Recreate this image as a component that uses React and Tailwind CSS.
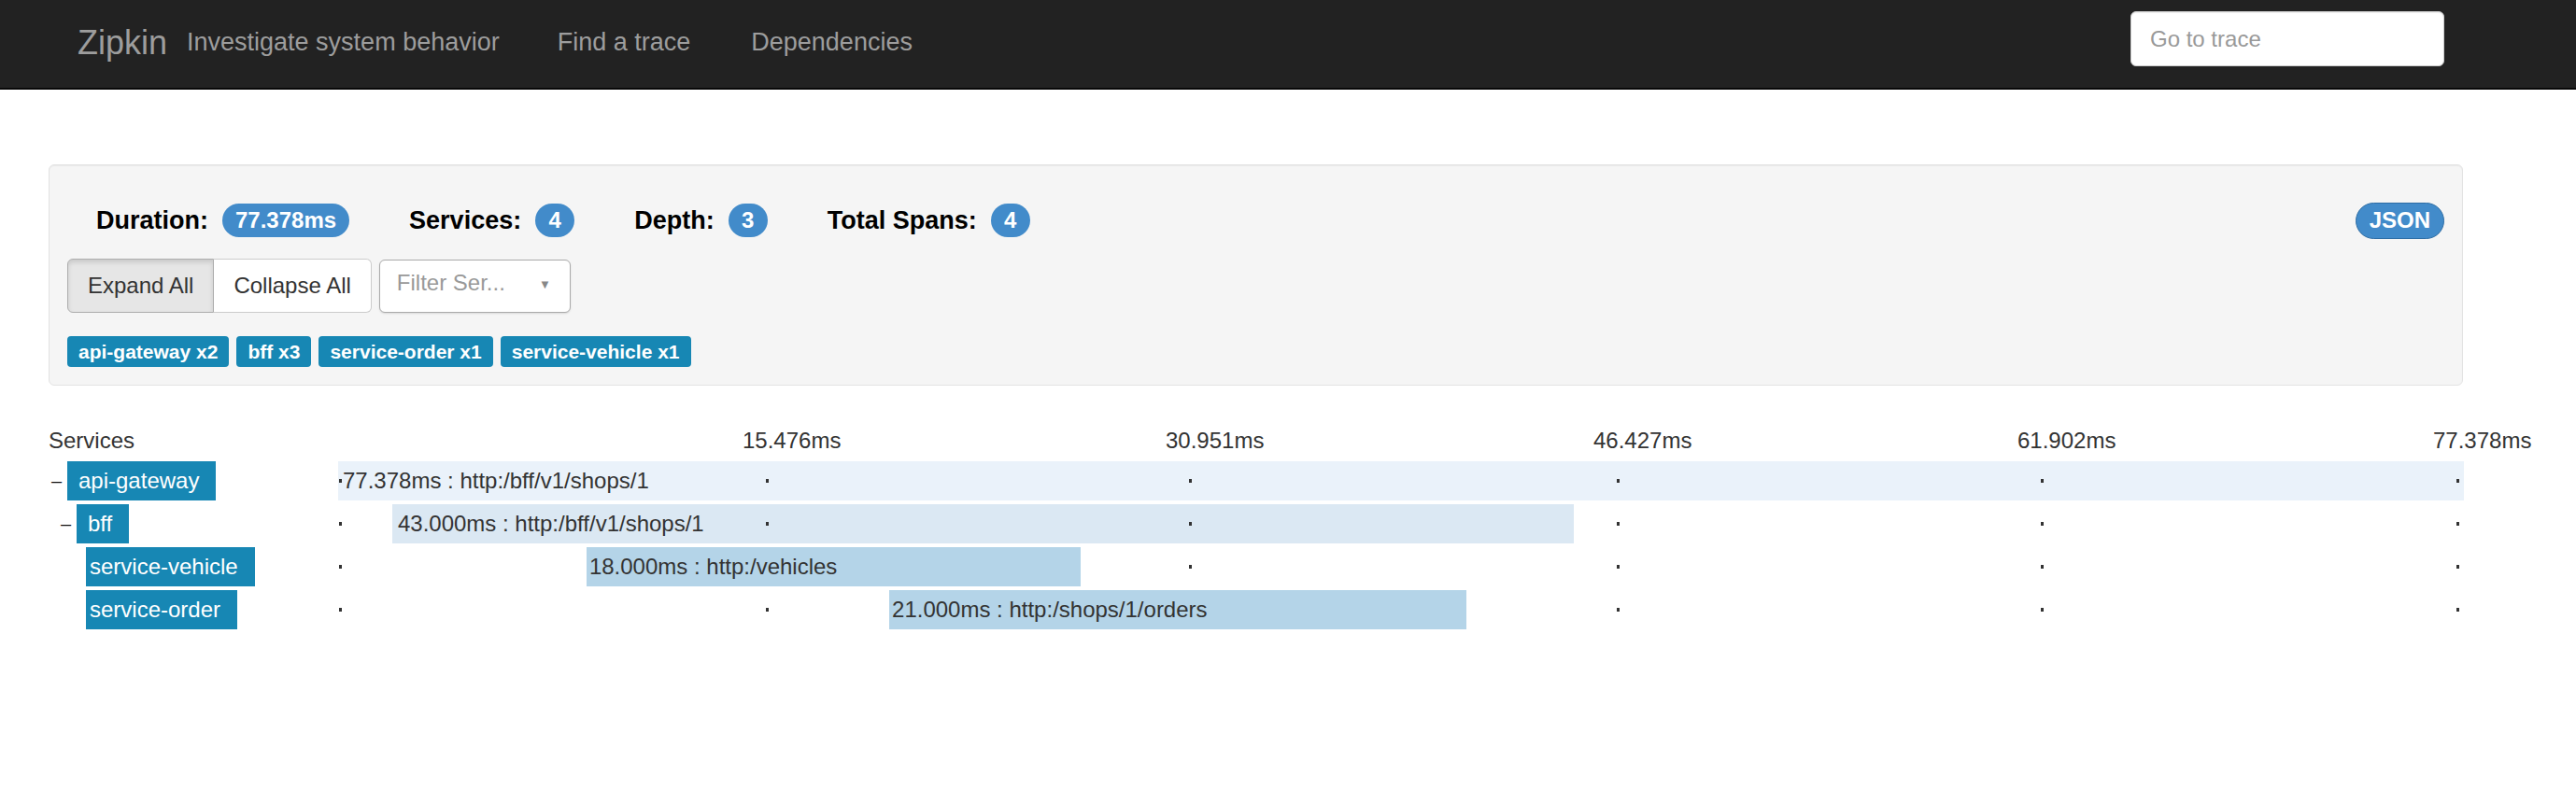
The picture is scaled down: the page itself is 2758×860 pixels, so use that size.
import React from 'react';

const TOTAL = 77.378;
const TRACK = 2276;

// tick dots, px from the start of the track
const ticks = [1, 458, 911, 1369, 1823, 2268];
const markers = ['15.476ms', '30.951ms', '46.427ms', '61.902ms', '77.378ms'];

const spans = [
  { service: 'api-gateway', depth: 0, parent: true, start: 0, duration: 77.378, label: '77.378ms : http:/bff/v1/shops/1', color: 'bg-[#eaf2fa]', pad: 'pl-[5px]' },
  { service: 'bff', depth: 1, parent: true, start: 1.97, duration: 43, label: '43.000ms : http:/bff/v1/shops/1', color: 'bg-[#dbe8f3]', pad: 'pl-[6px]' },
  { service: 'service-vehicle', depth: 2, start: 9.04, duration: 18, label: '18.000ms : http:/vehicles', color: 'bg-[#b4d4e8]', pad: 'pl-[3px]' },
  { service: 'service-order', depth: 2, start: 20.06, duration: 21, label: '21.000ms : http:/shops/1/orders', color: 'bg-[#b4d4e8]', pad: 'pl-[3px]' },
];

const depthPad = ['pl-0', 'pl-[10px]', 'pl-[20px]'];

const tags = ['api-gateway x2', 'bff x3', 'service-order x1', 'service-vehicle x1'];

const Stat = ({ label, value, first, wide }) => (
  <div className={`flex items-center ${first ? '' : 'ml-[64px]'}`}>
    <span className="text-[27px] font-bold text-black">{label}</span>
    <span
      className={`ml-[15px] flex h-[36px] items-center justify-center rounded-full bg-[#428bca] text-[24px] font-bold text-white ${wide ? 'px-[14px]' : 'w-[42px]'}`}
    >
      {value}
    </span>
  </div>
);

const SpanRow = ({ span }) => {
  const left = (span.start / TOTAL) * TRACK;
  const width = (span.duration / TOTAL) * TRACK;

  return (
    <div className="flex h-[42px]">
      {/* service name column */}
      <div className={`flex w-[310px] shrink-0 ${depthPad[span.depth]}`}>
        <div className="flex w-[20px] items-center pl-[3px] text-[20px] leading-none text-[#111]">
          {span.parent ? '–' : ''}
        </div>
        <div className={`flex items-center bg-[#1787b4] pr-[18px] text-[24px] text-white ${span.parent ? 'pl-[12px]' : 'pl-[4px]'}`}>
          {span.service}
        </div>
      </div>

      {/* timeline track */}
      <div className="relative h-full w-[2276px] shrink-0">
        {ticks.map((t) => (
          <div
            key={t}
            className={`absolute top-[19px] h-[4px] w-[3px] bg-[#333] ${span.parent ? 'z-10' : ''}`}
            style={{ left: t }}
          />
        ))}
        <div
          className={`relative flex h-full items-center whitespace-nowrap text-[24px] text-[#333] ${span.color} ${span.pad}`}
          style={{ marginLeft: left, width }}
        >
          {span.label}
        </div>
      </div>
    </div>
  );
};

export default function App() {
  return (
    <div className="min-h-screen w-[2758px] bg-white font-['Liberation_Sans',Arial,sans-serif]">
      {/* Navbar */}
      <nav className="flex h-[96px] items-center border-b-2 border-[#080808] bg-[#222] pb-[3px] pl-[83px] pr-[141px]">
        <span className="text-[36px] text-[#9d9d9d]">Zipkin</span>
        <span className="ml-[21px] text-[27px] text-[#9d9d9d]">Investigate system behavior</span>
        <span className="ml-[62px] text-[27px] text-[#9d9d9d]">Find a trace</span>
        <span className="ml-[65px] text-[27px] text-[#9d9d9d]">Dependencies</span>
        <div className="ml-auto mt-[12px] flex h-[59px] w-[336px] items-center self-start rounded-[6px] border border-[#ccc] bg-white pl-[20px] text-[24px] text-[#999] shadow-[inset_0_1px_1px_rgba(0,0,0,0.075)]">
          Go to trace
        </div>
      </nav>

      <div className="pl-[52px] pt-[80px]">
        {/* Trace summary panel */}
        <div className="w-[2585px] rounded-[6px] border border-[#e3e3e3] bg-[#f5f5f5] px-[19px] pb-[19px] pt-[39px] shadow-[inset_0_1px_1px_rgba(0,0,0,0.05)]">
          <div className="flex h-[40px] items-center justify-between">
            <div className="ml-[31px] flex items-center">
              <Stat label="Duration:" value="77.378ms" first wide />
              <Stat label="Services:" value="4" />
              <Stat label="Depth:" value="3" />
              <Stat label="Total Spans:" value="4" />
            </div>
            <span className="flex h-[39px] items-center rounded-full border-[1.5px] border-[#2e6da4] bg-[#428bca] px-[14px] text-[24px] font-bold text-white">
              JSON
            </span>
          </div>

          <div className="mt-[21px] flex items-center">
            <button className="h-[58px] rounded-l-[6px] border border-[#adadad] bg-[#e6e6e6] px-[21px] text-[24px] text-[#333] shadow-[inset_0_3px_5px_rgba(0,0,0,0.125)]">
              Expand All
            </button>
            <button className="h-[58px] rounded-r-[6px] border border-l-0 border-[#ccc] bg-white px-[21px] text-[24px] text-[#333]">
              Collapse All
            </button>
            <div className="ml-[8px] flex h-[57px] w-[205px] items-center justify-between rounded-[6px] border border-[#aaa] bg-white pb-[6px] pl-[18px] pr-[20px] text-[24px] text-[#999] shadow-[0_1px_2px_rgba(0,0,0,0.12)]">
              <span>Filter Ser...</span>
              <span className="pt-[4px] text-[13px] text-[#888]">▼</span>
            </div>
          </div>

          <div className="mt-[25px] flex gap-[8px]">
            {tags.map((t) => (
              <span key={t} className="flex h-[33px] items-center rounded-[4px] bg-[#1787b4] px-[12px] text-[21px] font-bold text-white">
                {t}
              </span>
            ))}
          </div>
        </div>

        {/* Timeline header */}
        <div className="mt-[45px] flex h-[28px] text-[24px] leading-[28px] text-[#333]">
          <div className="w-[310px] shrink-0">Services</div>
          <div className="relative w-[2276px] shrink-0">
            {markers.map((m, i) => (
              <span key={m} className="absolute top-0 whitespace-nowrap" style={{ left: ticks[i + 1] - 25 }}>
                {m}
              </span>
            ))}
          </div>
        </div>

        {/* Span rows */}
        <div className="mt-[8px] flex flex-col gap-[4px]">
          {spans.map((s) => (
            <SpanRow key={s.service} span={s} />
          ))}
        </div>
      </div>
    </div>
  );
}
